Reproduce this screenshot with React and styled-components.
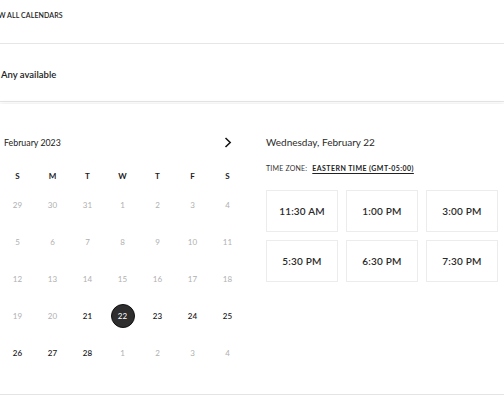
import React from "react";
import styled, { createGlobalStyle } from "styled-components";

const Global = createGlobalStyle`
  html, body { margin: 0; padding: 0; background: #fff; }
  body { font-family: Lato, "Noto Sans", sans-serif; color: #222; overflow: hidden; }
`;

const Page = styled.div`
  width: 504px;
  display: flex;
  flex-direction: column;
`;

const TopBar = styled.div`
  height: 44px;
  border-bottom: 1px solid #e6e6e6;
  display: flex;
  align-items: flex-start;
  padding-top: 10px;
  box-sizing: border-box;
`;

const BackLink = styled.a`
  margin-left: -13px;
  font-size: 7px;
  font-weight: 600;
  letter-spacing: 0.1px;
  color: #222;
  text-decoration: none;
  line-height: 10px;
  white-space: nowrap;
`;

const CalendarRow = styled.div`
  height: 58px;
  border-bottom: 1px solid #e6e6e6;
  display: flex;
  align-items: center;
  padding: 3px 0 0 1px;
  box-sizing: border-box;
  font-size: 9.5px;
  font-weight: 600;
`;

const Card = styled.section`
  margin-top: 2px;
  height: 291px;
  border-bottom: 1px solid #e4e4e4;
  box-shadow: 0 0 5px rgba(0, 0, 0, 0.1), 0 2px 4px rgba(0, 0, 0, 0.06);
  display: flex;
  gap: 21px;
  padding-top: 26px;
  box-sizing: border-box;
`;

const Calendar = styled.div`
  width: 245px;
  flex: none;
`;

const MonthHeader = styled.div`
  height: 24px;
  display: flex;
  align-items: center;
  justify-content: space-between;
  padding: 0 11px 0 4px;
  margin-bottom: 12px;
`;

const MonthTitle = styled.span`
  font-size: 8.8px;
  font-weight: 400;
  color: #222;
`;

const NavButton = styled.button`
  border: 0;
  background: none;
  padding: 0;
  width: 12px;
  height: 14px;
  display: flex;
  align-items: center;
  justify-content: center;
  cursor: pointer;
`;

const Grid = styled.div`
  display: grid;
  grid-template-columns: repeat(7, 35px);
`;

const WeekDay = styled.div`
  height: 20px;
  display: flex;
  align-items: center;
  justify-content: center;
  font-size: 8px;
  font-weight: 700;
  color: #222;
`;

const Day = styled.div`
  height: 37px;
  display: flex;
  align-items: center;
  justify-content: center;
  font-size: 8px;
  color: ${(p) => (p.$muted ? "#b0b0b0" : "#222")};
  font-weight: ${(p) => (p.$muted ? 400 : 600)};
`;

const DayBadge = styled.span`
  width: 24px;
  height: 24px;
  border-radius: 50%;
  display: flex;
  align-items: center;
  justify-content: center;
  box-sizing: border-box;
  ${(p) =>
    p.$selected &&
    `
    background: #2e2e2e;
    border: 1.5px solid #111;
    color: #fff;
    font-weight: 400;
  `}
`;

const Slots = styled.div`
  display: flex;
  flex-direction: column;
`;

const DateTitle = styled.h2`
  margin: 0;
  height: 24px;
  display: flex;
  align-items: center;
  font-size: 10px;
  font-weight: 400;
  color: #2a2a2a;
`;

const TimeZone = styled.div`
  margin-top: 8px;
  font-size: 7px;
  letter-spacing: 0.2px;
  color: #333;
  height: 12px;
  display: flex;
  align-items: center;
  gap: 5px;
`;

const ZoneLink = styled.a`
  font-weight: 700;
  color: #222;
  letter-spacing: 0.45px;
  text-decoration: underline;
  text-underline-offset: 1.5px;
`;

const SlotGrid = styled.div`
  margin-top: 16px;
  display: grid;
  grid-template-columns: repeat(3, 72px);
  grid-auto-rows: 42px;
  gap: 8px;
`;

const Slot = styled.button`
  border: 1px solid #ececec;
  background: #fff;
  font-family: inherit;
  font-size: 10px;
  font-weight: 600;
  letter-spacing: 0.2px;
  color: #2a2a2a;
  padding: 0;
  cursor: pointer;
`;

const weekDays = ["S", "M", "T", "W", "T", "F", "S"];

const days = [
  ...[29, 30, 31].map((d) => ({ d, muted: true })),
  ...Array.from({ length: 28 }, (_, i) => ({ d: i + 1, muted: i + 1 < 21 })),
  ...[1, 2, 3, 4].map((d) => ({ d, muted: true })),
];

const times = ["11:30 AM", "1:00 PM", "3:00 PM", "5:30 PM", "6:30 PM", "7:30 PM"];

export default function App() {
  return (
    <Page>
      <Global />
      <TopBar>
        <BackLink href="#">VIEW ALL CALENDARS</BackLink>
      </TopBar>
      <CalendarRow>Any available</CalendarRow>
      <Card>
        <Calendar>
          <MonthHeader>
            <MonthTitle>February 2023</MonthTitle>
            <NavButton aria-label="Next month">
              <svg width="8" height="11" viewBox="0 0 8 11">
                <path d="M1.5 1 L6.2 5.5 L1.5 10" fill="none" stroke="#111" strokeWidth="1.5" />
              </svg>
            </NavButton>
          </MonthHeader>
          <Grid>
            {weekDays.map((w, i) => (
              <WeekDay key={i}>{w}</WeekDay>
            ))}
            {days.map((x, i) => (
              <Day key={i} $muted={x.muted}>
                <DayBadge $selected={!x.muted && x.d === 22 && i > 20}>{x.d}</DayBadge>
              </Day>
            ))}
          </Grid>
        </Calendar>
        <Slots>
          <DateTitle>Wednesday, February 22</DateTitle>
          <TimeZone>
            TIME ZONE: <ZoneLink href="#">EASTERN TIME (GMT-05:00)</ZoneLink>
          </TimeZone>
          <SlotGrid>
            {times.map((t) => (
              <Slot key={t}>{t}</Slot>
            ))}
          </SlotGrid>
        </Slots>
      </Card>
    </Page>
  );
}
